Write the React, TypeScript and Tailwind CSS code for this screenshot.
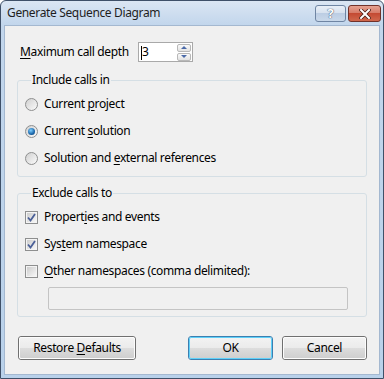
import React from 'react';

const FONT = { fontFamily: '"Noto Sans", "Open Sans", sans-serif', letterSpacing: '-0.35px' };

// underlined access key, like the Windows mnemonics
const Key: React.FC<{ children: React.ReactNode }> = ({ children }) => (
  <span className="underline underline-offset-[2px] decoration-[1px]">{children}</span>
);

const Radio: React.FC<{ checked?: boolean; children: React.ReactNode }> = ({ checked, children }) => (
  <div className="flex items-center h-[16px]">
    <span className="w-[13px] h-[13px] rounded-full border border-[#8e8f8f] bg-gradient-to-br from-[#d0d0d0] to-[#fbfbfb] flex items-center justify-center">
      {checked && (
        <span className="w-[7px] h-[7px] rounded-full bg-[radial-gradient(circle_at_40%_35%,#7fcfff,#1a66aa_60%,#0b3566)]" />
      )}
    </span>
    <span className="ml-[6px] text-[12px] leading-[16px]">{children}</span>
  </div>
);

const Checkbox: React.FC<{ checked?: boolean; children: React.ReactNode }> = ({ checked, children }) => (
  <div className="flex items-center h-[16px]">
    <span className="w-[13px] h-[13px] border border-[#8e8f8f] bg-white flex items-center justify-center">
      <span className="w-[11px] h-[11px] border border-[#f4f4f4] bg-gradient-to-br from-[#cdcdcd] to-[#f7f7f7] flex items-center justify-center">
        {checked && (
          <svg width="9" height="9" viewBox="0 0 9 9">
            <path d="M1 4.5 L3.5 7.5 L8 1" fill="none" stroke="#4a5f97" strokeWidth="1.8" />
          </svg>
        )}
      </span>
    </span>
    <span className="ml-[6px] text-[12px] leading-[16px]">{children}</span>
  </div>
);

const Button: React.FC<{ children: React.ReactNode; width: string; primary?: boolean }> = ({ children, width, primary }) => (
  <button
    type="button"
    className={
      'h-[24px] rounded-[3px] border text-[12px] leading-[16px] text-black p-0 ' +
      width +
      (primary ? ' border-[#3c7fb1]' : ' border-[#707070]')
    }
  >
    <span
      className={
        'flex h-full w-full items-center justify-center rounded-[2px] border bg-[linear-gradient(#f2f2f2_0%,#ebebeb_50%,#dddddd_50%,#cfcfcf_100%)] ' +
        (primary ? 'border-[#5fd0f8]' : 'border-[#fcfcfc]')
      }
    >
      <span>{children}</span>
    </span>
  </button>
);

export default function App() {
  return (
    <div className="w-[384px] h-[379px] text-black" style={FONT}>
      <div className="flex h-full flex-col rounded-t-[6px] border border-[#3f5068] bg-[linear-gradient(#dbe6f3_0px,#c2d6ec_24px,#b9d1ea_100%)]">
        {/* title bar */}
        <div className="flex h-[24px] items-center pl-[6px] pr-[2px]">
          <span className="flex-1 text-[12px] leading-[16px] text-[#1e1e1e]">Generate Sequence Diagram</span>
          <div className="flex items-start gap-[2px] self-start pt-[4px]">
            <span className="flex h-[17px] w-[31px] items-center justify-center rounded-[3px] border border-[#6f85a3] bg-[linear-gradient(#e9eff7_0%,#d5e0ee_50%,#bccde3_50%,#c9d8ea_100%)]">
              <span className="text-[13px] font-bold leading-none text-white [text-shadow:0_0_1px_#3b4b66,0_0_1px_#3b4b66]">?</span>
            </span>
            <span className="flex h-[17px] w-[33px] items-center justify-center rounded-[3px] border border-[#71322a] bg-[linear-gradient(#e5a191_0%,#d57865_50%,#c44a33_50%,#d0684d_100%)]">
              <svg width="12" height="10" viewBox="0 0 12 10">
                <path d="M2 1 L10 9 M10 1 L2 9" stroke="#4b1d16" strokeWidth="3.6" strokeLinecap="square" />
                <path d="M2 1 L10 9 M10 1 L2 9" stroke="#ffffff" strokeWidth="2" strokeLinecap="square" />
              </svg>
            </span>
          </div>
        </div>

        {/* client area */}
        <div className="mx-[3px] mb-[3px] flex-1 border border-[#a4b8d0] bg-[#f0f0f0]">
          <div className="px-[12px] pt-[16px]">
            <div className="flex items-center pl-[3px]">
              <span className="w-[118px] text-[12px] leading-[16px]">
                <Key>M</Key>aximum call depth
              </span>
              <div className="flex h-[20px] w-[55px] items-center border border-[#a9a9a9] bg-white">
                <span className="flex-1 pl-[2px] text-[12px] leading-[16px]">
                  <span className="inline-block h-[14px] w-[1px] bg-black align-middle" />3
                </span>
                <div className="mr-[1px] flex flex-col gap-[1px]">
                  <span className="flex h-[8px] w-[14px] items-center justify-center rounded-[2px] border border-[#b8b8b8] bg-[linear-gradient(#fafafa,#e2e2e2)]">
                    <span className="h-0 w-0 border-x-[3px] border-b-[3px] border-x-transparent border-b-[#4b6aa8]" />
                  </span>
                  <span className="flex h-[8px] w-[14px] items-center justify-center rounded-[2px] border border-[#b8b8b8] bg-[linear-gradient(#fafafa,#e2e2e2)]">
                    <span className="h-0 w-0 border-x-[3px] border-t-[3px] border-x-transparent border-t-[#4b6aa8]" />
                  </span>
                </div>
              </div>
            </div>

            <fieldset className="mt-[10px] w-[350px] rounded-[3px] border border-[#d5dfe5] pl-[7px] pt-[8px] pb-[10px]">
              <legend className="ml-[6px] px-[1px] text-[12px] leading-[16px]">Include calls in</legend>
              <div className="flex flex-col gap-[11px]">
                <Radio>Current <Key>p</Key>roject</Radio>
                <Radio checked>Current <Key>s</Key>olution</Radio>
                <Radio>Solution and <Key>e</Key>xternal references</Radio>
              </div>
            </fieldset>

            <fieldset className="mt-[8px] w-[350px] rounded-[3px] border border-[#d5dfe5] pl-[7px] pt-[8px] pb-[6px]">
              <legend className="ml-[6px] px-[1px] text-[12px] leading-[16px]">Exclude calls to</legend>
              <div className="flex flex-col gap-[11px]">
                <Checkbox checked>Propert<Key>i</Key>es and events</Checkbox>
                <Checkbox checked>Sys<Key>t</Key>em namespace</Checkbox>
                <Checkbox><Key>O</Key>ther namespaces (comma delimited):</Checkbox>
              </div>
              <div className="ml-[23px] mt-[8px] h-[23px] w-[300px] rounded-[2px] border border-[#c4c4c4] bg-[#f0f0f0]" />
            </fieldset>

            <div className="mt-[19px] flex items-center pl-[1px]">
              <Button width="w-[118px]">
                Restore <Key>D</Key>efaults
              </Button>
              <div className="flex-1" />
              <Button width="w-[85px]" primary>OK</Button>
              <Button width="w-[85px] ml-[9px]">Cancel</Button>
            </div>
          </div>
        </div>
      </div>
    </div>
  );
}
